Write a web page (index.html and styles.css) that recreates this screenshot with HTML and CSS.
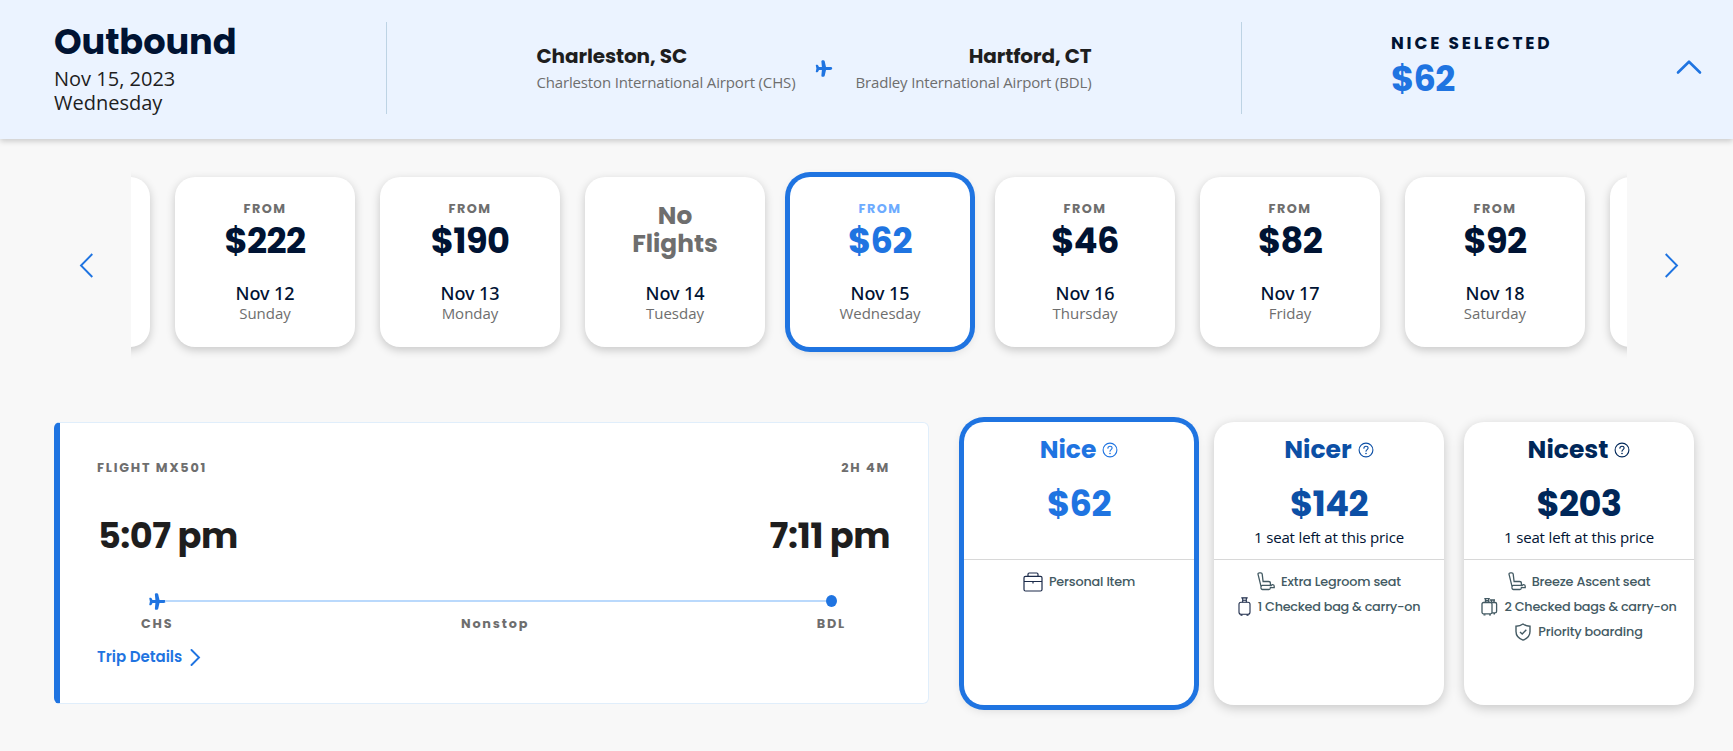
FILE: index.html
```html
<!DOCTYPE html>
<html lang="en">
<head>
    <meta charset="UTF-8">
    <meta name="viewport" content="width=device-width, initial-scale=1.0">
    <title>Select Flights</title>
    <link rel="stylesheet" href="styles.css">
</head>
<body>
    <!-- Shared icons -->
    <svg class="sprite" width="0" height="0">
        <symbol id="plane" viewBox="0 0 17 17">
            <path d="M0.8 4.8h.9c.5 0 .8.2 1 .6l.8 1.7h2.900L5.900 1.800C5.800.8 6.300.3 7.100.3h.8c.7 0 1.100.4 1.300 1l1.300 5.800h4.200c1.200 0 2 .5 2 1.400s-.8 1.400-2 1.400h-4.200l-1.300 5.800c-.2.6-.6 1-1.300 1h-.8c-.8 0-1.300-.5-1.200-1.500l.5-5.300H3.500l-.8 1.700c-.2.4-.5.6-1 .6H.8c-.4 0-.6-.3-.5-.7L.9 8.500.3 5.500c-.1-.4.1-.7.5-.7z" fill="currentColor"/>
        </symbol>
        <symbol id="help" viewBox="0 0 16 16">
            <circle cx="8" cy="8" r="6.900" fill="none" stroke="currentColor" stroke-width="1.100"/>
            <path d="M5.900 6.300c0-1.300.9-2.100 2.100-2.100s2.100.8 2.100 1.900c0 1.500-2.100 1.500-2.100 3.200" fill="none" stroke="currentColor" stroke-width="1.100" stroke-linecap="round"/>
            <circle cx="8" cy="11.500" r=".8" fill="currentColor"/>
        </symbol>
        <symbol id="seat" viewBox="0 0 18 19">
            <path d="M1 2.200C.9 1.200 1.500.9 2.400.9h1.400c.9 0 1.300.4 1.400 1.200l.9 7.400h5.400c1.300 0 1.900.7 1.900 1.800v2.200h.9c.4-.7 1-.9 1.600-.8.9.1 1.300.7 1.300 1.500v1.500h-3.800c-.1 1-.6 1.800-1.500 1.800H5.500c-.9 0-1.500-.5-1.500-1.400v-1.300c0-.9.500-1.400 1.400-1.400h8M4.200 15.200L1 2.200" fill="none" stroke="currentColor" stroke-width="1.300"/>
        </symbol>
        <symbol id="bag" viewBox="0 0 13 19">
            <path d="M3.300.9h6.400M4.700 1v4.200M8.300 1v4.200M4.700 3.200h3.600" fill="none" stroke="currentColor" stroke-width="1.100"/>
            <rect x="1" y="5.200" width="11" height="12" rx="2" fill="none" stroke="currentColor" stroke-width="1.100"/>
            <path d="M2.500 18.200h2M8.500 18.200h2" stroke="currentColor" stroke-width="1.200"/>
        </symbol>
    </svg>

    <header class="header">
        <div class="trip">
            <h1>Outbound</h1>
            <p>Nov 15, 2023</p>
            <p>Wednesday</p>
        </div>
        <div class="route">
            <div class="airport">
                <h2>Charleston, SC</h2>
                <p>Charleston International Airport (CHS)</p>
            </div>
            <svg class="plane" width="18" height="17"><use href="#plane"/></svg>
            <div class="airport airport-to">
                <h2>Hartford, CT</h2>
                <p>Bradley International Airport (BDL)</p>
            </div>
        </div>
        <div class="selected-fare">
            <div>
                <h3>NICE SELECTED</h3>
                <p class="price">$62</p>
            </div>
            <svg class="collapse" width="28" height="17" viewBox="0 0 28 17">
                <path d="M3 13.500L14 2.700l11 10.800" fill="none" stroke="currentColor" stroke-width="2.600" stroke-linecap="round" stroke-linejoin="round"/>
            </svg>
        </div>
    </header>

    <!-- Date carousel -->
    <section class="carousel">
        <svg class="arrow" width="15" height="25" viewBox="0 0 15 25">
            <path d="M13.300 1L2 12.500 13.300 24" fill="none" stroke="currentColor" stroke-width="1.900"/>
        </svg>
        <div class="days">
            <div class="day"></div>
            <div class="day">
                <div class="fare"><span class="from">FROM</span><span class="price">$222</span></div>
                <p class="date">Nov 12</p>
                <p class="weekday">Sunday</p>
            </div>
            <div class="day">
                <div class="fare"><span class="from">FROM</span><span class="price">$190</span></div>
                <p class="date">Nov 13</p>
                <p class="weekday">Monday</p>
            </div>
            <div class="day">
                <div class="fare no-flights"><span>No</span><span>Flights</span></div>
                <p class="date">Nov 14</p>
                <p class="weekday">Tuesday</p>
            </div>
            <div class="day active">
                <div class="fare"><span class="from">FROM</span><span class="price">$62</span></div>
                <p class="date">Nov 15</p>
                <p class="weekday">Wednesday</p>
            </div>
            <div class="day">
                <div class="fare"><span class="from">FROM</span><span class="price">$46</span></div>
                <p class="date">Nov 16</p>
                <p class="weekday">Thursday</p>
            </div>
            <div class="day">
                <div class="fare"><span class="from">FROM</span><span class="price">$82</span></div>
                <p class="date">Nov 17</p>
                <p class="weekday">Friday</p>
            </div>
            <div class="day">
                <div class="fare"><span class="from">FROM</span><span class="price">$92</span></div>
                <p class="date">Nov 18</p>
                <p class="weekday">Saturday</p>
            </div>
            <div class="day"></div>
        </div>
        <svg class="arrow" width="15" height="25" viewBox="0 0 15 25">
            <path d="M1.700 1L13 12.500 1.700 24" fill="none" stroke="currentColor" stroke-width="1.900"/>
        </svg>
    </section>

    <!-- Flight and fares -->
    <section class="results">
        <div class="flight">
            <div class="flight-row label">
                <span>FLIGHT MX501</span>
                <span>2H 4M</span>
            </div>
            <div class="flight-row times">
                <span>5:07 pm</span>
                <span>7:11 pm</span>
            </div>
            <div class="timeline">
                <svg class="plane" width="17" height="17"><use href="#plane"/></svg>
                <span class="line"></span>
                <span class="dot"></span>
            </div>
            <div class="stops label">
                <span>CHS</span>
                <span>Nonstop</span>
                <span>BDL</span>
            </div>
            <a class="details" href="#">Trip Details
                <svg width="11" height="17" viewBox="0 0 11 17">
                    <path d="M1.500 1L9 8.500 1.500 16" fill="none" stroke="currentColor" stroke-width="1.900" stroke-linecap="round"/>
                </svg>
            </a>
        </div>

        <div class="fares">
            <div class="fare-card nice active">
                <h3>Nice <svg width="16" height="16"><use href="#help"/></svg></h3>
                <p class="price">$62</p>
                <p class="seats"></p>
                <ul>
                    <li>
                        <svg class="dark" width="20" height="20" viewBox="0 0 20 20">
                            <path d="M5 4.300V2.200C5 1.400 5.400 1 6.200 1h7.600c.8 0 1.200.4 1.200 1.200v2.100M1 9.500h18M10 9.500v2" fill="none" stroke="currentColor" stroke-width="1.200"/>
                            <rect x="1" y="4.300" width="18" height="14.700" rx="1.500" fill="none" stroke="currentColor" stroke-width="1.200"/>
                        </svg>
                        <span>Personal Item</span>
                    </li>
                </ul>
            </div>
            <div class="fare-card nicer">
                <h3>Nicer <svg width="16" height="16"><use href="#help"/></svg></h3>
                <p class="price">$142</p>
                <p class="seats">1 seat left at this price</p>
                <ul>
                    <li><svg width="18" height="19"><use href="#seat"/></svg><span>Extra Legroom seat</span></li>
                    <li><svg class="luggage dark" width="13" height="19"><use href="#bag"/></svg><span class="bags">1 Checked bag &amp; carry-on</span></li>
                </ul>
            </div>
            <div class="fare-card nicest">
                <h3>Nicest <svg width="16" height="16"><use href="#help"/></svg></h3>
                <p class="price">$203</p>
                <p class="seats">1 seat left at this price</p>
                <ul>
                    <li><svg width="18" height="19"><use href="#seat"/></svg><span>Breeze Ascent seat</span></li>
                    <li>
                        <svg width="17" height="19" viewBox="0 0 17 19">
                            <path d="M3.300 1.600h5.500M4.500 1.500v4M7.700 1.500v4M4.500 3.800h3.200M9 3h5M10.500 3v2.500M13 3v2.500" fill="none" stroke="currentColor" stroke-width="1.400"/>
                            <rect x="1" y="5.500" width="10" height="11.300" rx="1.500" fill="none" stroke="currentColor" stroke-width="1.300"/>
                            <path d="M11 5.500h3c1 0 1.600.6 1.600 1.600v7.200c0 1-.6 1.600-1.600 1.600h-3M2.500 17.900h2M8 17.900h2M12.500 16.800h1.500" fill="none" stroke="currentColor" stroke-width="1.300"/>
                        </svg>
                        <span class="bags">2 Checked bags &amp; carry-on</span>
                    </li>
                    <li>
                        <svg class="luggage" width="16" height="18" viewBox="0 0 16 18">
                            <path d="M8 1c2 1.500 4.200 2.200 7 2.300v5.200c0 4.200-2.600 7-7 8.600-4.400-1.600-7-4.400-7-8.600V3.300C3.800 3.200 6 2.500 8 1zM5 9l2.200 2 4.100-4.200" fill="none" stroke="currentColor" stroke-width="1.400"/>
                        </svg>
                        <span>Priority boarding</span>
                    </li>
                </ul>
            </div>
        </div>
    </section>
</body>
</html>
```
FILE: styles.css
```css
* {
    box-sizing: border-box;
}

body {
    min-height: 100vh;
    margin: 0;
    font-family: "Open Sans", "Noto Sans", sans-serif;
    background-color: #f8f8f8;
    color: #1e1e1e;
}

h1, h2, h3, p, ul {
    margin: 0;
    padding: 0;
}

h1, h2, h3, .price, .label, .from, .no-flights, .times, .details, li {
    font-family: Poppins, Inter, sans-serif;
    font-weight: 700;
}

svg {
    display: block;
    flex: none;
}

.sprite {
    position: absolute;
}

.price {
    font-size: 35.2px;
    line-height: 40px;
    letter-spacing: -0.6px;
}

/* Header */
.header {
    display: flex;
    height: 139px;
    padding: 22px 0 25px;
    background-color: #ebf3ff;
    box-shadow: 0 2px 6px rgba(0, 0, 0, 0.2);
}

.trip {
    width: 387px;
    padding-left: 54px;
    border-right: 1px solid #bdd3e4;
}

.trip h1 {
    margin-bottom: 5px;
    font-size: 35.2px;
    line-height: 40px;
    letter-spacing: -0.1px;
    color: #001333;
}

.trip p {
    font-size: 20px;
    line-height: 24px;
}

.route {
    display: flex;
    align-items: center;
    justify-content: center;
    width: 855px;
    border-right: 1px solid #bdd3e4;
}

.route .plane {
    margin: 0 22px 0 20px;
}

.plane {
    color: #1f74e1;
}

.airport h2 {
    margin-bottom: 4px;
    font-size: 20px;
    line-height: 24px;
    letter-spacing: -0.1px;
}

.airport p {
    font-size: 15px;
    line-height: 20px;
    letter-spacing: -0.15px;
    color: #6e6e6e;
}

.airport-to {
    text-align: right;
}

.selected-fare {
    display: flex;
    flex: 1;
    justify-content: space-between;
    padding: 11px 30px 0 149px;
}

.selected-fare h3 {
    margin-bottom: 6px;
    font-size: 17px;
    line-height: 20px;
    letter-spacing: 2.8px;
    color: #001333;
}

.selected-fare .price, .collapse {
    color: #1f74e1;
}

.collapse {
    margin-top: 26px;
}

/* Date carousel */
.carousel {
    display: flex;
    align-items: center;
    justify-content: space-between;
    padding: 13px 54px 0 79px;
    color: #1f74e1;
}

.arrow {
    margin-bottom: 2px;
}

.days {
    display: flex;
    gap: 25px;
    width: 1496px;
    height: 228px;
    margin-left: 37px;
    margin-right: 37px;
    padding: 25px 0 33px;
    overflow: hidden;
}

.day:first-child {
    margin-left: -161px;
}

.day {
    flex: none;
    width: 180px;
    height: 170px;
    padding-top: 24px;
    border-radius: 20px;
    background-color: #fff;
    box-shadow: 0 3px 10px rgba(0, 0, 0, 0.2);
    color: #001333;
    text-align: center;
}

.fare {
    display: flex;
    flex-direction: column;
    height: 60px;
    margin-bottom: 21px;
}

.from {
    margin-bottom: 4px;
    font-size: 12.8px;
    line-height: 16px;
    letter-spacing: 1.5px;
    color: #6e6e6e;
}

.no-flights {
    padding-top: 1px;
    font-size: 24.8px;
    line-height: 28px;
    color: #6e6e6e;
}

.date {
    font-family: "Noto Sans", sans-serif;
    font-size: 18px;
    font-weight: 500;
    line-height: 22px;
    letter-spacing: -0.1px;
}

.weekday {
    font-size: 15px;
    line-height: 18px;
    color: #6e6e6e;
}

.active {
    box-shadow: 0 0 0 5px #1f74e1, 0 3px 12px rgba(0, 0, 0, 0.2);
}

.day.active .price {
    color: #1f74e1;
}

.day.active .from {
    color: #6dabff;
}

/* Flight */
.results {
    display: flex;
    gap: 35px;
    padding: 42px 0 40px 54px;
}

.flight {
    width: 875px;
    height: 282px;
    padding: 37px 38px 0 37px;
    border: 1px solid #e0eefb;
    border-left: 6px solid #1f74e1;
    border-radius: 6px;
    background-color: #fff;
}

.flight-row {
    display: flex;
    justify-content: space-between;
}

.label {
    font-size: 12.8px;
    line-height: 16px;
    letter-spacing: 1.8px;
    color: #6e6e6e;
}

.times {
    margin: 40px 0 37px;
    padding-left: 1px;
    font-size: 35.2px;
    line-height: 40px;
    letter-spacing: -0.5px;
}

.timeline {
    display: flex;
    align-items: center;
    height: 16px;
    margin: 0 53px 7px 52px;
}

.line {
    flex: 1;
    height: 2px;
    margin-left: -1px;
    background-color: #bad9fc;
}

.dot {
    width: 11px;
    height: 12px;
    border-radius: 50%;
    background-color: #1f74e1;
}

.stops {
    display: flex;
    justify-content: space-between;
    margin: 0 44px;
}

.details {
    display: flex;
    align-items: center;
    gap: 8px;
    margin-top: 15px;
    font-size: 15px;
    font-weight: 600;
    line-height: 20px;
    color: #1f74e1;
    text-decoration: none;
}

/* Fare cards */
.fares {
    display: flex;
    gap: 20px;
}

.fare-card {
    width: 230px;
    height: 283px;
    padding-top: 13px;
    border-radius: 20px;
    background-color: #fff;
    text-align: center;
}

.fare-card:not(.active) {
    box-shadow: 0 3px 12px rgba(0, 0, 0, 0.2);
}

.fare-card h3 {
    display: flex;
    align-items: center;
    justify-content: center;
    gap: 6px;
    margin-bottom: 19px;
    font-size: 25px;
    line-height: 30px;
}

.fare-card h3 svg {
    margin-top: 0;
}

.nice h3, .nice .price {
    color: #1f74e1;
}

.nicer h3, .nicer .price {
    color: #0c4fa5;
}

.nicest h3, .nicest .price {
    color: #002759;
}

.seats {
    height: 20px;
    margin: 3px 0 12px;
    font-size: 15px;
    line-height: 20px;
    letter-spacing: -0.15px;
    color: #001333;
}

.fare-card ul {
    padding-top: 9px;
    border-top: 1px solid #d8d8d8;
    list-style: none;
}

.fare-card li {
    display: flex;
    align-items: center;
    justify-content: center;
    gap: 6px;
    height: 25px;
    font-size: 12.8px;
    font-weight: 500;
    letter-spacing: -0.18px;
    color: #435a63;
}

.fare-card .bags {
    letter-spacing: -0.25px;
}

.luggage {
    margin-right: 1px;
}

.dark {
    color: #1c2b4a;
}
```
